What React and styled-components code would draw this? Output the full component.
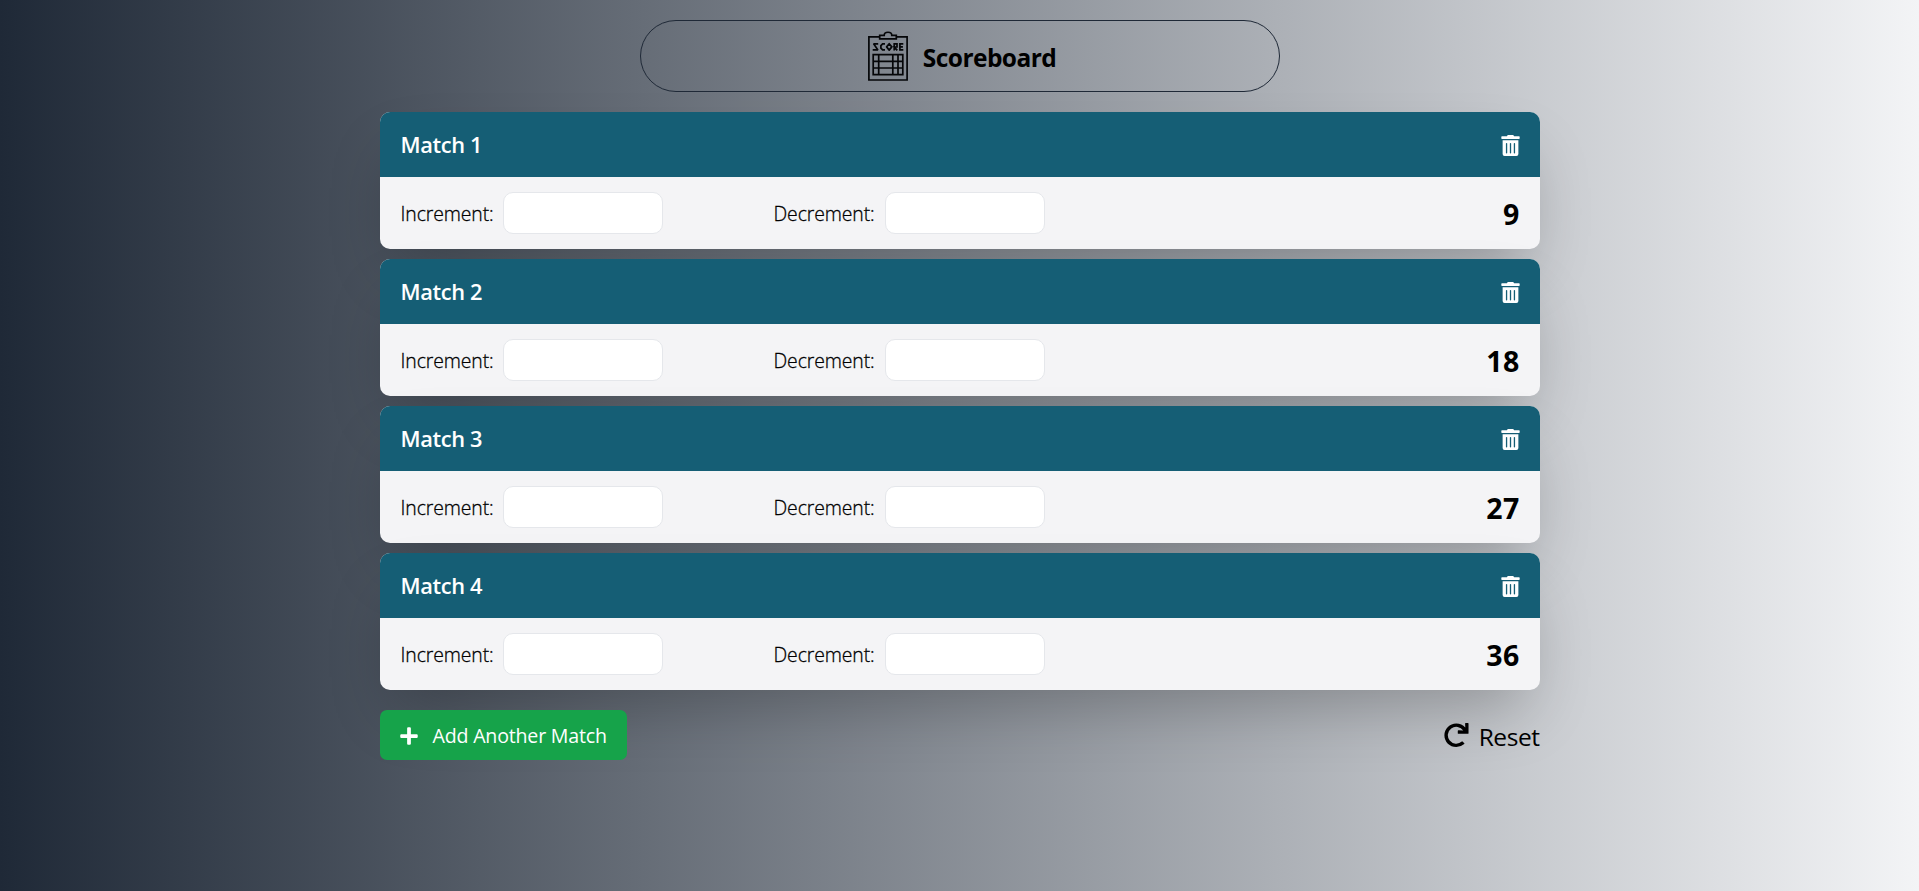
import React, { useState } from "react";
import styled, { createGlobalStyle } from "styled-components";
import { FaTrashAlt, FaPlus, FaRedo } from "react-icons/fa";

const GlobalStyle = createGlobalStyle`
  *, *::before, *::after { box-sizing: border-box; }
  body {
    margin: 0;
    color: #000;
    font-family: "Open Sans", "Noto Sans", sans-serif;
  }
  h1, h2, form { margin: 0; }
  button { font: inherit; color: inherit; border: 0; padding: 0; background: none; cursor: pointer; }
`;

const Page = styled.div`
  min-height: 100vh;
  padding-top: 20px;
  background: linear-gradient(to right, #1f2937, #f3f4f6);
`;

const Banner = styled.header`
  display: flex;
  align-items: center;
  justify-content: center;
  gap: 15px;
  width: 640px;
  height: 72px;
  margin: 0 auto;
  padding-left: 5px;
  border: 1px solid #1f2937;
  border-radius: 36px;
`;

const Logo = styled.svg`
  width: 40px;
  height: 50px;
  margin-top: -1px;
`;

const Title = styled.h1`
  margin-top: 3px;
  font-size: 24.5px;
  line-height: 36px;
  font-weight: 700;
  letter-spacing: -0.55px;
`;

const Content = styled.main`
  width: 1160px;
  margin: 20px auto 0;
`;

const MatchList = styled.div`
  display: flex;
  flex-direction: column;
  gap: 10px;
`;

const Card = styled.section`
  height: 137px;
  border-radius: 10px;
  background: #f4f4f6;
  box-shadow: 0 31.25px 62.5px -15px rgba(0, 0, 0, 0.25);
`;

const CardHeader = styled.div`
  display: flex;
  align-items: center;
  justify-content: space-between;
  height: 65px;
  padding: 0 18.5px 0 21px;
  border-radius: 10px 10px 0 0;
  background: #155e75;
  color: #fff;
`;

const MatchName = styled.h2`
  font-size: 21.8px;
  line-height: 32px;
  font-weight: 600;
  letter-spacing: -0.35px;
`;

const DeleteButton = styled.button`
  display: flex;
  margin-top: 2px;
  font-size: 21px;
`;

const CardBody = styled.div`
  display: flex;
  align-items: center;
  height: 72px;
  padding: 0 20px;
`;

const Field = styled.form`
  display: flex;
  align-items: center;
  width: ${(p) => p.$width}px;
`;

const Label = styled.label`
  width: ${(p) => p.$width}px;
  padding-left: 1px;
  padding-top: 1px;
  font-size: 19.4px;
  font-weight: 300;
  letter-spacing: -0.1px;
  -webkit-text-stroke: 0.3px #000;
  white-space: nowrap;
`;

const ScoreInput = styled.input`
  width: 160px;
  height: 42px;
  padding: 0 10px;
  font: inherit;
  border: 1px solid #e5e7eb;
  border-radius: 10px;
  background: #fff;
  outline: none;
`;

const Total = styled.span`
  margin-left: auto;
  margin-top: 2px;
  font-size: 28.5px;
  font-weight: 700;
  letter-spacing: 0.3px;
`;

const Actions = styled.footer`
  display: flex;
  align-items: center;
  justify-content: space-between;
  margin-top: 20px;
`;

const AddButton = styled.button`
  display: flex;
  align-items: center;
  gap: 14px;
  width: 247px;
  height: 50px;
  padding-left: 19px;
  border-radius: 7px;
  background: #16a34a;
  color: #fff;
  font-size: 20px;
  white-space: nowrap;

  svg { margin-top: 1px; }
`;

const ResetButton = styled.button`
  display: flex;
  align-items: center;
  gap: 10px;
  font-size: 24.5px;

  svg { margin-top: 1px; }
`;

const AddText = styled.span`
  font-size: 19.6px;
  letter-spacing: -0.2px;
`;

const ResetText = styled.span`
  margin-top: 3px;
  letter-spacing: -0.45px;
`;

function ScoreLogo() {
  return (
    <Logo viewBox="0 0 40 50" fill="none" stroke="#050608" strokeWidth="1.7">
      <path d="M11.6 5.9H.9V49H39.1V5.9H28.4" />
      <path d="M16.2 4.3C16.2.2 23.8.2 23.8 4.3H28.3V7.9H11.7V4.3Z" />
      <path d="M5.2 23.6H34.8V43.6H5.2ZM10.7 23.6V43.6M24.8 23.6V43.6M30 23.6V43.6M5.2 30.4H34.8M5.2 37H34.8" />
      <g strokeWidth="1.7">
        <path d="M10.2 12.8H5.6L9.9 18.9H4.7" strokeLinejoin="bevel" />
        <path d="M17 12.8H14.6L12.9 14.6V17.1L14.6 18.9H17" />
        <path d="M21.2 12.7L23.8 15.9 21.2 19.1 18.6 15.9Z" strokeLinejoin="round" />
        <path d="M26.2 19.6V12.8H29V16H26.2L29.3 19.4" />
        <path d="M35.3 12.8H31.9V18.9H35.3M31.9 15.9H34.9" />
      </g>
    </Logo>
  );
}

const initialMatches = [
  { id: 1, total: 9 },
  { id: 2, total: 18 },
  { id: 3, total: 27 },
  { id: 4, total: 36 },
];

function MatchCard({ number, match, onChange, onDelete }) {
  const submit = (sign) => (event) => {
    event.preventDefault();
    const value = Number(event.currentTarget.elements.amount.value) || 0;
    onChange(match.id, Math.max(0, match.total + sign * value));
  };
  return (
    <Card>
      <CardHeader>
        <MatchName>Match {number}</MatchName>
        <DeleteButton aria-label="Delete match" onClick={() => onDelete(match.id)}>
          <FaTrashAlt />
        </DeleteButton>
      </CardHeader>
      <CardBody>
        <Field $width={373} onSubmit={submit(1)}>
          <Label $width={103} htmlFor={`inc-${match.id}`}>Increment:</Label>
          <ScoreInput id={`inc-${match.id}`} name="amount" />
        </Field>
        <Field $width={373} onSubmit={submit(-1)}>
          <Label $width={112} htmlFor={`dec-${match.id}`}>Decrement:</Label>
          <ScoreInput id={`dec-${match.id}`} name="amount" />
        </Field>
        <Total>{match.total}</Total>
      </CardBody>
    </Card>
  );
}

export default function App() {
  const [matches, setMatches] = useState(initialMatches);
  const change = (id, total) => setMatches((list) => list.map((m) => (m.id === id ? { ...m, total } : m)));
  const remove = (id) => setMatches((list) => list.filter((m) => m.id !== id));
  const add = () => setMatches((list) => [...list, { id: Math.max(0, ...list.map((m) => m.id)) + 1, total: 0 }]);
  const reset = () => setMatches((list) => list.map((m) => ({ ...m, total: 0 })));

  return (
    <>
      <GlobalStyle />
      <Page>
        <Banner>
          <ScoreLogo />
          <Title>Scoreboard</Title>
        </Banner>
        <Content>
          <MatchList>
            {matches.map((match, i) => (
              <MatchCard key={match.id} number={i + 1} match={match} onChange={change} onDelete={remove} />
            ))}
          </MatchList>
          <Actions>
            <AddButton onClick={add}>
              <FaPlus />
              <AddText>Add Another Match</AddText>
            </AddButton>
            <ResetButton onClick={reset}>
              <FaRedo />
              <ResetText>Reset</ResetText>
            </ResetButton>
          </Actions>
        </Content>
      </Page>
    </>
  );
}
